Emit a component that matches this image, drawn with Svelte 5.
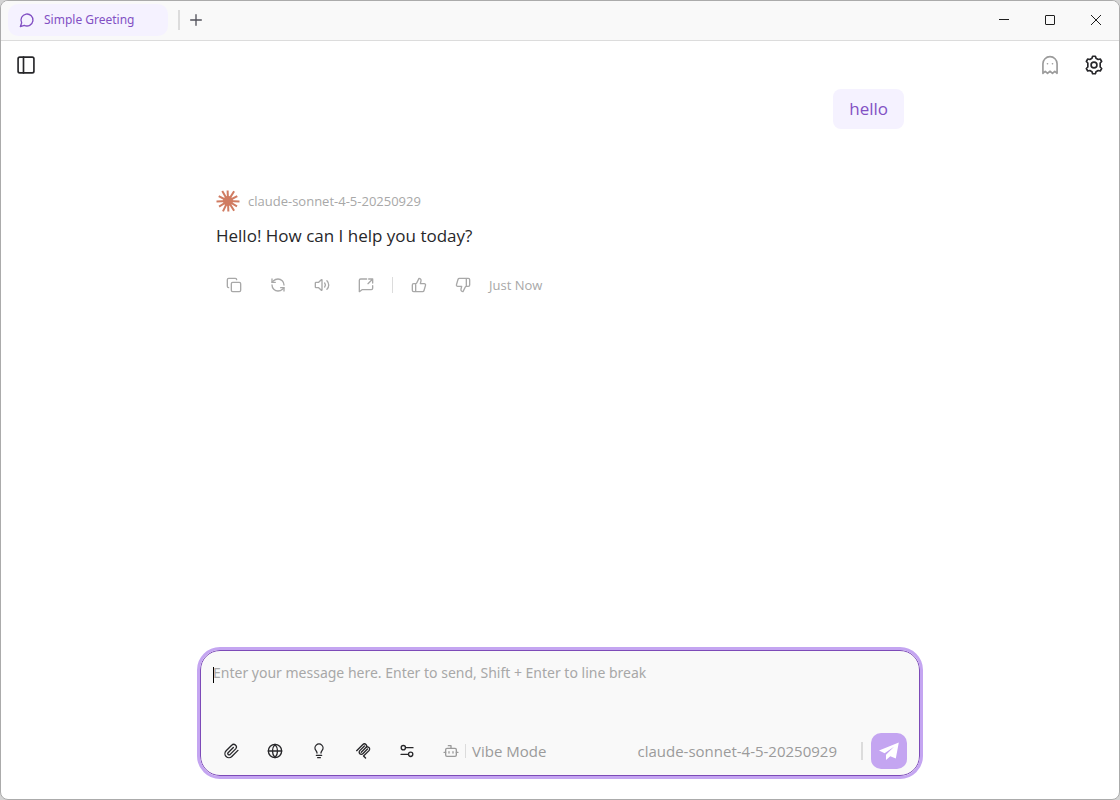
<script lang="ts">
	type Message = {
		role: 'user' | 'assistant';
		text: string;
		model?: string;
		time?: string;
	};

	const title = 'Simple Greeting';
	const model = 'claude-sonnet-4-5-20250929';

	let draft = $state('');
	let sidebarOpen = $state(false);
	let messages = $state<Message[]>([
		{ role: 'user', text: 'hello' },
		{ role: 'assistant', text: 'Hello! How can I help you today?', model, time: 'Just Now' }
	]);

	const rays = [2, 31, 58, 88, 116, 148, 178, 208, 240, 268, 302, 332];

	function send() {
		const text = draft.trim();
		if (!text) return;
		messages.push({ role: 'user', text });
		draft = '';
	}

	function handleKeydown(event: KeyboardEvent) {
		if (event.key === 'Enter' && !event.shiftKey) {
			event.preventDefault();
			send();
		}
	}
</script>

{#snippet icon(name: string, size = 16)}
	<svg class="icon" width={size} height={size} viewBox="0 0 24 24" aria-hidden="true">
		{#if name === 'chat'}
			<path d="M7.9 20A9 9 0 1 0 4 16.1L2 22Z" />
		{:else if name === 'plus'}
			<path d="M4 12h16M12 4v16" />
		{:else if name === 'panel'}
			<rect x="2.5" y="2.5" width="19" height="19" rx="2" />
			<path d="M9 2.5v19" />
		{:else if name === 'ghost'}
			<path d="M3.5 22V10.500a8.500 8.500 0 0 1 17 0V22l-2.800-2.500L15 22l-3-2.500L9 22l-2.700-2.500Z" />
			<path d="M9 10.500h.01M15 10.500h.01" />
		{:else if name === 'gear'}
			<path d="M9.600 3.900 10.300 1.500h3.400l.7 2.400 2.600 1.500 2.500-.6 1.700 3-1.800 1.800v4.800l1.800 1.800-1.700 3-2.500-.6-2.600 1.500-.7 2.400h-3.400l-.7-2.400L7 18.600l-2.500.6-1.700-3 1.800-1.800V9.600L2.800 7.800l1.700-3 2.500.6Z" />
			<circle cx="12" cy="12" r="3.500" />
		{:else if name === 'copy'}
			<rect x="8" y="8" width="14" height="14" rx="2" />
			<path d="M4 16a2 2 0 0 1-2-2V4a2 2 0 0 1 2-2h10a2 2 0 0 1 2 2" />
		{:else if name === 'refresh'}
			<path d="M21 12a9 9 0 0 0-9-9 9.750 9.750 0 0 0-6.740 2.740L3 8" />
			<path d="M3 3v5h5M3 12a9 9 0 0 0 9 9 9.750 9.750 0 0 0 6.740-2.740L21 16" />
			<path d="M16 16h5v5" />
		{:else if name === 'volume'}
			<path d="M12 4.500v15a.6.6 0 0 1-1 .4L7 16H3a1 1 0 0 1-1-1V9a1 1 0 0 1 1-1h4l4-3.900a.6.6 0 0 1 1 .4Z" />
			<path d="M16 9a5 5 0 0 1 0 6M19.400 5.600a9 9 0 0 1 0 12.800" />
		{:else if name === 'share'}
			<path d="M22 13v4a2 2 0 0 1-2 2H6l-4 3V5a2 2 0 0 1 2-2h9M16 3h6v6M22 3l-7 7" />
		{:else if name === 'up'}
			<path d="M7 10v12M15 5.880 14 10h5.830a2 2 0 0 1 1.920 2.560l-2.330 8A2 2 0 0 1 17.500 22H4a2 2 0 0 1-2-2v-8a2 2 0 0 1 2-2h2.760a2 2 0 0 0 1.790-1.110L12 2a3.130 3.130 0 0 1 3 3.880Z" />
		{:else if name === 'down'}
			<path d="M17 14V2M9 18.120 10 14H4.170a2 2 0 0 1-1.920-2.560l2.330-8A2 2 0 0 1 6.500 2H20a2 2 0 0 1 2 2v8a2 2 0 0 1-2 2h-2.760a2 2 0 0 0-1.790 1.110L12 22a3.130 3.130 0 0 1-3-3.880Z" />
		{:else if name === 'clip'}
			<path d="m22.400 11.100-9.200 9.100a6 6 0 0 1-8.500-8.500L13 3.500A4 4 0 0 1 19 8.800l-8.600 8.600a2 2 0 0 1-2.800-2.800L15.500 6.700" />
		{:else if name === 'globe'}
			<circle cx="12" cy="12" r="10" />
			<path d="M12 2a15 15 0 0 0 0 20 15 15 0 0 0 0-20M2 12h20" />
		{:else if name === 'bulb'}
			<path d="M9 15c0-1.500-.6-2.300-1.500-3.500a6 6 0 1 1 9 0C15.600 12.700 15 13.500 15 15M8 18.500h8M10 22h4" />
		{:else if name === 'mcp'}
			<path d="m2.500 11.500 9.300-9.300a3.200 3.200 0 0 1 4.600 4.600l-7 7M9.500 13.700l6.900-6.900a3.200 3.200 0 0 1 4.600 4.600l-8.200 8.200 3 3" />
			<path d="m14.100 4.500-6.900 6.900a3.200 3.200 0 0 0 4.600 4.600l6.900-6.900" />
		{:else if name === 'sliders'}
			<circle cx="6.500" cy="7" r="3.200" />
			<circle cx="17.500" cy="17" r="3.200" />
			<path d="M10 7h11M3 17h11" />
		{:else if name === 'bot'}
			<path d="M12 8V4H8M1.500 14H4M20 14h2.500M9 13v2M15 13v2" />
			<rect x="4" y="8" width="16" height="12" rx="2" />
		{/if}
	</svg>
{/snippet}

<div class="window">
	<header class="titlebar">
		<button class="tab" type="button">
			{@render icon('chat')}
			<span>{title}</span>
		</button>
		<span class="tab-divider"></span>
		<button class="new-tab" type="button" aria-label="New tab">{@render icon('plus')}</button>
		<div class="window-controls">
			<button type="button" aria-label="Minimize">
				<svg width="12" height="12" viewBox="0 0 12 12"><path d="M1 5.500h10" /></svg>
			</button>
			<button type="button" aria-label="Maximize">
				<svg width="12" height="12" viewBox="0 0 12 12"><rect x="1.500" y="1.500" width="9" height="9" rx="0.500" /></svg>
			</button>
			<button type="button" aria-label="Close">
				<svg width="12" height="12" viewBox="0 0 12 12"><path d="m1 1 10 10M11 1 1 11" /></svg>
			</button>
		</div>
	</header>

	<nav class="toolbar">
		<button type="button" aria-label="Toggle sidebar" aria-pressed={sidebarOpen} onclick={() => (sidebarOpen = !sidebarOpen)}>
			{@render icon('panel', 20)}
		</button>
		<div class="toolbar-right">
			<button class="muted" type="button" aria-label="Temporary chat">{@render icon('ghost', 20)}</button>
			<button type="button" aria-label="Settings">{@render icon('gear', 20)}</button>
		</div>
	</nav>

	<main class="chat">
		{#each messages as message}
			{#if message.role === 'user'}
				<div class="bubble">{message.text}</div>
			{:else}
				<article class="reply">
					<div class="author">
						<svg class="logo" width="24" height="24" viewBox="0 0 24 24" aria-hidden="true">
							{#each rays as angle, i}
								<path d={i % 2 ? 'M12 12h10.500' : 'M12 12h11.500'} transform={`rotate(${angle} 12 12)`} />
							{/each}
							<circle cx="12" cy="12" r="4" />
						</svg>
						<span>{message.model}</span>
					</div>
					<p>{message.text}</p>
					<div class="actions">
						<button type="button" aria-label="Copy">{@render icon('copy')}</button>
						<button type="button" aria-label="Regenerate">{@render icon('refresh')}</button>
						<button type="button" aria-label="Read aloud">{@render icon('volume')}</button>
						<button type="button" aria-label="Share">{@render icon('share')}</button>
						<span class="divider"></span>
						<button type="button" aria-label="Good reply">{@render icon('up')}</button>
						<button type="button" aria-label="Bad reply">{@render icon('down')}</button>
						<time>{message.time}</time>
					</div>
				</article>
			{/if}
		{/each}
	</main>

	<form class="composer" onsubmit={(event) => { event.preventDefault(); send(); }}>
		<div class="field">
			<textarea
				bind:value={draft}
				onkeydown={handleKeydown}
				aria-label="Message"
				placeholder="Enter your message here. Enter to send, Shift + Enter to line break"
			></textarea>
			{#if !draft}
				<span class="caret"></span>
			{/if}
		</div>
		<div class="tools">
			<button type="button" aria-label="Attach file">{@render icon('clip')}</button>
			<button type="button" aria-label="Web search">{@render icon('globe')}</button>
			<button type="button" aria-label="Thinking">{@render icon('bulb')}</button>
			<button type="button" aria-label="MCP servers">{@render icon('mcp')}</button>
			<button type="button" aria-label="Parameters">{@render icon('sliders')}</button>
			<button class="vibe" type="button">
				{@render icon('bot')}
				<span class="vibe-label">Vibe Mode</span>
			</button>
			<button class="model" type="button">{model}</button>
			<span class="send-divider"></span>
			<button class="send" type="submit" aria-label="Send">
				<svg width="20" height="20" viewBox="0 0 20 20" aria-hidden="true">
					<path d="M19.800 1.500 16.800 17.500l-5.500-2.200L7 19v-5.200l8-8L5.600 12.200 0 9.600Z" />
				</svg>
			</button>
		</div>
	</form>
</div>

<style>
	:global(body) {
		margin: 0;
		background: #d4d4d4;
	}

	.window {
		display: flex;
		flex-direction: column;
		box-sizing: border-box;
		min-height: 100vh;
		border: 1px solid #ababab;
		border-radius: 8px;
		overflow: hidden;
		background: #fff;
		color: #27272a;
		font-family: 'Segoe UI', 'Open Sans', 'Noto Sans', sans-serif;
	}

	button {
		display: flex;
		align-items: center;
		justify-content: center;
		margin: 0;
		padding: 0;
		border: 0;
		background: none;
		color: inherit;
		font: inherit;
		cursor: pointer;
	}

	.icon {
		flex: none;
		fill: none;
		stroke: currentColor;
		stroke-width: 2;
		stroke-linecap: round;
		stroke-linejoin: round;
	}

	.titlebar {
		display: flex;
		align-items: center;
		height: 38px;
		padding: 0 0 1px 7px;
		border-bottom: 1px solid #dcdcdc;
		background: #f9f9f9;
	}

	.tab {
		justify-content: flex-start;
		gap: 9px;
		width: 160px;
		height: 32px;
		padding-left: 11px;
		border-radius: 10px;
		background: #f5f2ff;
		color: #8250c4;
		font-family: 'Segoe UI', 'Noto Sans', sans-serif;
		font-size: 12px;
		line-height: 16px;
	}

	.tab-divider {
		width: 2px;
		height: 20px;
		margin-left: 10px;
		background: #dcdcdc;
	}

	.new-tab {
		width: 32px;
		height: 32px;
		color: #52525b;
	}

	.window-controls {
		display: flex;
		align-self: stretch;
		margin-left: auto;
	}

	.window-controls button {
		width: 46px;
	}

	.window-controls svg {
		fill: none;
		stroke: #1f1f1f;
	}

	.toolbar {
		display: flex;
		justify-content: space-between;
		padding: 6px 7px;
	}

	.toolbar-right {
		display: flex;
		gap: 8px;
	}

	.toolbar button {
		width: 36px;
		height: 36px;
	}

	.toolbar .muted {
		color: #9b9b9b;
	}

	.chat {
		display: flex;
		flex: 1;
		flex-direction: column;
		gap: 56px;
		box-sizing: border-box;
		width: 100%;
		max-width: 688px;
		margin: 0 auto;
	}

	.bubble {
		align-self: flex-end;
		padding: 8px 16px;
		border-radius: 8px;
		background: #f5f2ff;
		color: #8250c4;
		font-size: 17px;
		line-height: 24px;
	}

	.author {
		display: flex;
		align-items: center;
		gap: 8px;
		height: 32px;
		color: #a8a8a8;
		font-size: 13px;
		line-height: 16px;
	}

	.logo {
		stroke: #d07c62;
		stroke-width: 2;
		fill: #d07c62;
	}

	.reply p {
		margin: 7px 0 19px;
		font-size: 17px;
		line-height: 24px;
	}

	.actions {
		display: flex;
		align-items: center;
		gap: 8px;
		color: #a8a8a8;
		font-size: 13px;
		line-height: 16px;
	}

	.actions button {
		width: 36px;
		height: 36px;
	}

	.divider {
		width: 1px;
		height: 16px;
		background: #dcdcdc;
	}

	.composer {
		box-sizing: border-box;
		width: calc(100% - 32px);
		max-width: 720px;
		margin: 16px auto 23px;
		padding: 12px 12px 6px;
		border: 1px solid #7d4bb8;
		border-radius: 20px;
		outline: 3px solid #c4a5f1;
		background: #f9f9f9;
	}

	.field {
		position: relative;
		height: 70px;
	}

	textarea {
		display: block;
		box-sizing: border-box;
		width: 100%;
		height: 100%;
		padding: 0;
		border: 0;
		outline: 0;
		resize: none;
		background: transparent;
		color: inherit;
		font-family: 'Segoe UI', 'Noto Sans', sans-serif;
		font-size: 14px;
		line-height: 20px;
	}

	textarea::placeholder {
		color: #a8a8a8;
	}

	.caret {
		position: absolute;
		top: 4px;
		left: 0;
		width: 1px;
		height: 16px;
		background: #000;
	}

	.tools {
		display: flex;
		align-items: center;
		gap: 8px;
		font-size: 15px;
		line-height: 20px;
	}

	.tools button {
		min-width: 36px;
		height: 36px;
	}

	.tools .vibe {
		gap: 6px;
		padding-left: 10px;
		color: #9b9b9b;
	}

	.vibe-label {
		padding-left: 6px;
		border-left: 1px solid #dcdcdc;
		line-height: 14px;
	}

	.tools .model {
		margin-left: auto;
		margin-right: 16px;
		color: #9b9b9b;
	}

	.send-divider {
		width: 2px;
		height: 18px;
		background: #dcdcdc;
	}

	.tools .send {
		border-radius: 10px;
		background: #c4a5f1;
	}

	.send svg {
		fill: #fff;
	}
</style>
